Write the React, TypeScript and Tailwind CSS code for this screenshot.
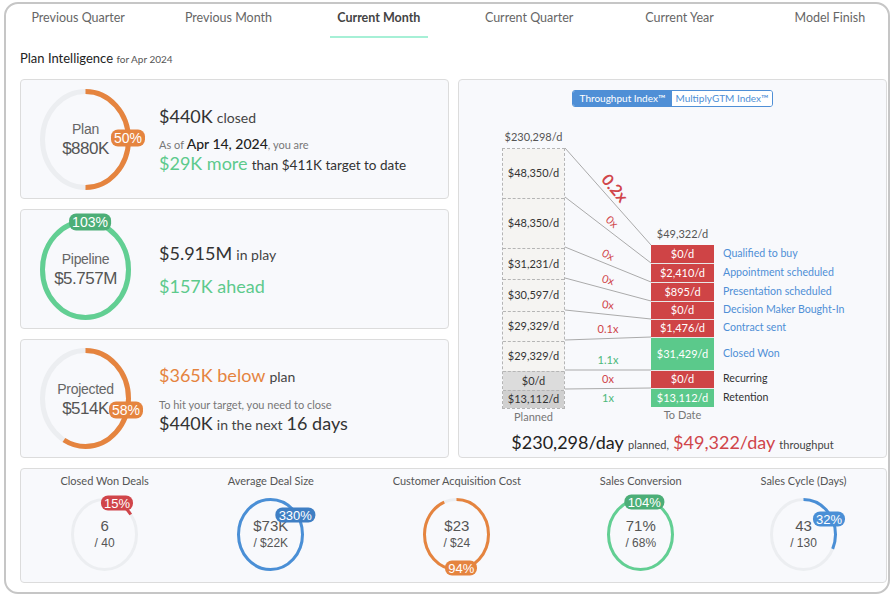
import type { ReactNode } from 'react'

const TRACK = '#eceef1'

const tabs = ['Previous Quarter', 'Previous Month', 'Current Month', 'Current Quarter', 'Current Year', 'Model Finish']

// elliptical progress ring, arc starts at 12 o'clock and runs clockwise
function Ring({ w, h, sw, pct, color }: { w: number; h: number; sw: number; pct: number; color: string }) {
  const rx = w / 2 - sw / 2
  const ry = h / 2 - sw / 2
  const d = `M ${w / 2} ${sw / 2} A ${rx} ${ry} 0 1 1 ${w / 2} ${h - sw / 2} A ${rx} ${ry} 0 1 1 ${w / 2} ${sw / 2}`
  return (
    <svg width={w} height={h} viewBox={`0 0 ${w} ${h}`} className="block">
      <path d={d} fill="none" stroke={TRACK} strokeWidth={sw} />
      {pct > 0 && (
        <path d={d} fill="none" stroke={color} strokeWidth={sw} pathLength={100} strokeDasharray={`${Math.min(pct, 100)} 100`} />
      )}
    </svg>
  )
}

function Badge({ children, className }: { children: ReactNode; className: string }) {
  return (
    <span
      className={`absolute -translate-x-1/2 -translate-y-1/2 rounded-[7px] px-[3px] text-white font-['Liberation_Sans',Arial,sans-serif] whitespace-nowrap ${className}`}
    >
      {children}
    </span>
  )
}

function BigRing({ pct, color, label, value, badge }: { pct: number; color: string; label: string; value: string; badge: ReactNode }) {
  return (
    <div className="relative w-[91px] h-[101px] shrink-0">
      <Ring w={91} h={101} sw={5} pct={pct} color={color} />
      <div className="absolute inset-0 flex flex-col items-center justify-center font-['Liberation_Sans',Arial,sans-serif] text-[#666]">
        <span className="text-[14px] leading-[20px] tracking-[-0.3px]">{label}</span>
        <span className="text-[17px] leading-[20px] tracking-[-0.5px] text-[#555]">{value}</span>
      </div>
      {badge}
    </div>
  )
}

const planned = [
  { v: '$48,350/d', h: 'h-[49px]', bg: 'bg-[#f5f4f2]' },
  { v: '$48,350/d', h: 'h-[50px]', bg: 'bg-[#f5f4f2]' },
  { v: '$31,231/d', h: 'h-[31px]', bg: 'bg-[#f5f4f2]' },
  { v: '$30,597/d', h: 'h-[32px]', bg: 'bg-[#f5f4f2]' },
  { v: '$29,329/d', h: 'h-[30px]', bg: 'bg-[#f5f4f2]' },
  { v: '$29,329/d', h: 'h-[30px]', bg: 'bg-[#f5f4f2]' },
  { v: '$0/d', h: 'h-[19px]', bg: 'bg-[#dcdcdc]' },
  { v: '$13,112/d', h: 'h-[18px]', bg: 'bg-[#d0d0d0]' },
]

const actual = [
  { v: '$0/d', h: 'h-[18px]', bg: 'bg-[#cf4446]', label: 'Qualified to buy', lc: 'text-[#4f8fd6]' },
  { v: '$2,410/d', h: 'h-[19px]', bg: 'bg-[#cf4446]', label: 'Appointment scheduled', lc: 'text-[#4f8fd6]' },
  { v: '$895/d', h: 'h-[19px]', bg: 'bg-[#cf4446]', label: 'Presentation scheduled', lc: 'text-[#4f8fd6]' },
  { v: '$0/d', h: 'h-[18px]', bg: 'bg-[#cf4446]', label: 'Decision Maker Bought-In', lc: 'text-[#4f8fd6]' },
  { v: '$1,476/d', h: 'h-[18px]', bg: 'bg-[#cf4446]', label: 'Contract sent', lc: 'text-[#4f8fd6]' },
  { v: '$31,429/d', h: 'h-[33px]', bg: 'bg-[#5bc98b]', label: 'Closed Won', lc: 'text-[#4f8fd6]' },
  { v: '$0/d', h: 'h-[18px]', bg: 'bg-[#cf4446]', label: 'Recurring', lc: 'text-[#333]' },
  { v: '$13,112/d', h: 'h-[19px]', bg: 'bg-[#5bc98b]', label: 'Retention', lc: 'text-[#333]' },
]

// connectors: top of each planned row -> top of matching to-date row
const plannedTops = [21, 70, 120, 151, 183, 213, 243, 262]
const actualTops = [118, 136, 155, 174, 192, 210, 243, 261]

const multipliers = [
  { t: '0x', cls: 'left-[47px] top-[95px] rotate-[42deg] text-[#d0454a]' },
  { t: '0x', cls: 'left-[43px] top-[128px] rotate-[28deg] text-[#d0454a]' },
  { t: '0x', cls: 'left-[43px] top-[153px] rotate-[16deg] text-[#d0454a]' },
  { t: '0x', cls: 'left-[43px] top-[178px] rotate-[6deg] text-[#d0454a]' },
  { t: '0.1x', cls: 'left-[43px] top-[202px] text-[#d0454a]' },
  { t: '1.1x', cls: 'left-[43px] top-[233px] text-[#4cb87a]' },
  { t: '0x', cls: 'left-[43px] top-[252px] text-[#d0454a]' },
  { t: '1x', cls: 'left-[43px] top-[271px] text-[#4cb87a]' },
]

const kpis = [
  { title: 'Closed Won Deals', value: '6', sub: '/ 40', pct: 15, color: '#d0454a', badge: '15%', bcls: 'left-[46px] top-[5px] bg-[#d0454a]' },
  { title: 'Average Deal Size', value: '$73K', sub: '/ $22K', pct: 100, color: '#4a8fd6', badge: '330%', bcls: 'left-[58px] top-[17px] bg-[#3f7fc4]' },
  { title: 'Customer Acquisition Cost', value: '$23', sub: '/ $24', pct: 94, color: '#e5843f', badge: '94%', bcls: 'left-[38px] top-[70px] bg-[#e5843f]' },
  { title: 'Sales Conversion', value: '71%', sub: '/ 68%', pct: 100, color: '#62cf93', badge: '104%', bcls: 'left-[37px] top-[4px] bg-[#4cae77]' },
  { title: 'Sales Cycle (Days)', value: '43', sub: '/ 130', pct: 32, color: '#4a8fd6', badge: '32%', bcls: 'left-[59px] top-[21px] bg-[#4a8fd6]' },
]

function ThroughputChart() {
  return (
    <div className="relative ml-[43px] mt-[20px] flex text-[11px]">
      {/* planned column */}
      <div className="flex w-[63px] shrink-0 flex-col">
        <div className="flex h-[21px] items-center justify-center text-[#555]">$230,298/d</div>
        <div className="border border-dashed border-[#b5b5b5]">
          {planned.map((r, i) => (
            <div
              key={i}
              className={`flex items-center justify-center text-[#333] ${r.h} ${r.bg} ${i > 0 ? 'border-t border-dashed border-[#b5b5b5]' : ''}`}
            >
              {r.v}
            </div>
          ))}
        </div>
        <div className="flex h-[17px] items-center justify-center text-[#777]">Planned</div>
      </div>

      {/* connectors and multipliers */}
      <div className="relative w-[86px] shrink-0">
        <svg width={86} height={297} className="absolute inset-0">
          {plannedTops.map((y, i) => (
            <line key={i} x1={0} y1={y} x2={86} y2={actualTops[i]} stroke="#aaa" strokeWidth={1} />
          ))}
        </svg>
        <span className="absolute left-[50px] top-[61px] -translate-x-1/2 -translate-y-1/2 rotate-[50deg] text-[16px] font-bold text-[#d0454a]">
          0.2x
        </span>
        {multipliers.map((m, i) => (
          <span key={i} className={`absolute -translate-x-1/2 -translate-y-1/2 ${m.cls}`}>
            {m.t}
          </span>
        ))}
      </div>

      {/* to date column */}
      <div className="flex w-[63px] shrink-0 flex-col">
        <div className="h-[97px]" />
        <div className="flex h-[21px] items-center justify-center text-[#555]">$49,322/d</div>
        {actual.map((r, i) => (
          <div key={i} className={`flex items-center justify-center text-white ${r.h} ${r.bg} ${i > 0 ? 'border-t border-[#e8e8e8]' : ''}`}>
            {r.v}
          </div>
        ))}
        <div className="flex h-[17px] items-center justify-center text-[#777]">To Date</div>
      </div>

      {/* stage names */}
      <div className="ml-[9px] flex shrink-0 flex-col text-[10.6px]">
        <div className="h-[118px]" />
        {actual.map((r, i) => (
          <div key={i} className={`flex items-center whitespace-nowrap ${r.h} ${r.lc}`}>
            {r.label}
          </div>
        ))}
      </div>
    </div>
  )
}

export default function App() {
  return (
    <div className="h-[595px] w-[892px] overflow-hidden bg-white font-['Lato','Noto_Sans',sans-serif] text-[#333]">
      <div className="ml-[4px] mt-[2px] h-[592px] w-[886px] overflow-hidden rounded-[14px] border-2 border-[#c6c6c6]">
        {/* period tabs */}
        <div className="-ml-[3px] grid w-[902px] grid-cols-6">
          {tabs.map((t) => {
            const active = t === 'Current Month'
            return (
              <div key={t} className="flex h-[34px] flex-col items-center">
                <span className={`mt-[6px] text-[12.5px] leading-[16px] ${active ? 'font-bold text-[#444]' : 'text-[#666]'}`}>{t}</span>
                <span className={`mt-auto h-[2px] w-[98px] ${active ? 'bg-[#a6f0d6]' : ''}`} />
              </div>
            )
          })}
        </div>

        <div className="pl-[14px] pr-[1px]">
          <h1 className="mt-[12px] text-[13px] leading-[16px] text-[#222]">
            Plan Intelligence <span className="text-[10px] text-[#555]">for Apr 2024</span>
          </h1>

          <div className="mt-[12px] flex gap-[9px]">
            {/* left cards */}
            <div className="flex w-[429px] flex-col gap-[10px]">
              <div className="flex h-[120px] items-center rounded-[4px] border border-[#dcdcdc] bg-[#f8f9fc] pl-[19px]">
                <BigRing
                  pct={50}
                  color="#e5843f"
                  label="Plan"
                  value="$880K"
                  badge={<Badge className="left-[88px] top-[49px] bg-[#e5843f] text-[14px] leading-[17px]">50%</Badge>}
                />
                <div className="ml-[28px] flex flex-col pt-[3px]">
                  <div className="leading-[20px]">
                    <span className="text-[18px] text-[#333]">$440K</span> <span className="text-[14px] text-[#444]">closed</span>
                  </div>
                  <div className="mt-[5px] leading-[20px]">
                    <span className="text-[11px] text-[#777]">As of </span>
                    <span className="text-[14px] font-medium text-[#222]">Apr 14, 2024</span>
                    <span className="text-[11px] text-[#777]">, you are</span>
                  </div>
                  <div className="-mt-[2px] leading-[20px]">
                    <span className="text-[18px] text-[#5dca8c]">$29K more</span>{' '}
                    <span className="text-[13.5px] text-[#333]">than $411K target to date</span>
                  </div>
                </div>
              </div>

              <div className="flex h-[120px] items-center rounded-[4px] border border-[#dcdcdc] bg-[#f8f9fc] pl-[19px]">
                <BigRing
                  pct={100}
                  color="#62cf93"
                  label="Pipeline"
                  value="$5.757M"
                  badge={<Badge className="left-[50px] top-[3px] bg-[#4cae77] text-[14px] leading-[17px]">103%</Badge>}
                />
                <div className="ml-[28px] flex flex-col">
                  <div className="leading-[22px]">
                    <span className="text-[18px] text-[#333]">$5.915M</span> <span className="text-[14px] text-[#444]">in play</span>
                  </div>
                  <div className="mt-[9px] text-[18px] leading-[22px] text-[#5dca8c]">$157K ahead</div>
                </div>
              </div>

              <div className="flex h-[119px] items-center rounded-[4px] border border-[#dcdcdc] bg-[#f8f9fc] pl-[19px]">
                <BigRing
                  pct={58}
                  color="#e5843f"
                  label="Projected"
                  value="$514K"
                  badge={<Badge className="left-[86px] top-[62px] bg-[#e5843f] text-[14px] leading-[17px]">58%</Badge>}
                />
                <div className="ml-[28px] flex flex-col pt-[3px]">
                  <div className="leading-[22px]">
                    <span className="text-[18px] text-[#e5843f]">$365K below</span> <span className="text-[14px] text-[#444]">plan</span>
                  </div>
                  <div className="mt-[9px] text-[11px] leading-[16px] text-[#777]">To hit your target, you need to close</div>
                  <div className="-mt-[1px] leading-[22px]">
                    <span className="text-[18px] text-[#333]">$440K</span> <span className="text-[14px] text-[#444]">in the next</span>{' '}
                    <span className="text-[18px] text-[#333]">16 days</span>
                  </div>
                </div>
              </div>
            </div>

            {/* throughput panel */}
            <div className="flex h-[379px] w-[429px] flex-col rounded-[4px] border border-[#dcdcdc] bg-[#f8f9fc] pt-[10px]">
              <div className="mx-auto flex h-[18px] overflow-hidden rounded-[3px] border border-[#4f8fd6] text-[10px]">
                <span className="flex w-[99px] items-center justify-center bg-[#4f8fd6] text-white">Throughput Index™</span>
                <span className="flex w-[100px] items-center justify-center bg-white text-[#4f8fd6]">MultiplyGTM Index™</span>
              </div>
              <ThroughputChart />
              <div className="mt-[4px] text-center leading-[24px]">
                <span className="text-[18px] text-[#222]">$230,298/day</span> <span className="text-[11px] text-[#444]">planned,</span>{' '}
                <span className="text-[18px] text-[#d0454a]">$49,322/day</span> <span className="text-[11px] text-[#444]">throughput</span>
              </div>
            </div>
          </div>

          {/* KPI strip */}
          <div className="mt-[10px] flex h-[115px] w-[867px] justify-around rounded-[4px] border border-[#dcdcdc] bg-[#f8f9fc] pt-[5px]">
            {kpis.map((k) => (
              <div key={k.title} className="flex flex-col items-center">
                <div className="text-[11px] leading-[14px] text-[#555]">{k.title}</div>
                <div className="relative mt-[10px] h-[73px] w-[67px]">
                  <Ring w={67} h={73} sw={3} pct={k.pct} color={k.color} />
                  <div className="absolute inset-0 flex flex-col items-center justify-center font-['Liberation_Sans',Arial,sans-serif] text-[#555]">
                    <span className="-mt-[2px] text-[15px] leading-[19px]">{k.value}</span>
                    <span className="text-[12px] leading-[17px]">{k.sub}</span>
                  </div>
                  <Badge className={`text-[13px] leading-[15px] ${k.bcls}`}>{k.badge}</Badge>
                </div>
              </div>
            ))}
          </div>
        </div>
      </div>
    </div>
  )
}
